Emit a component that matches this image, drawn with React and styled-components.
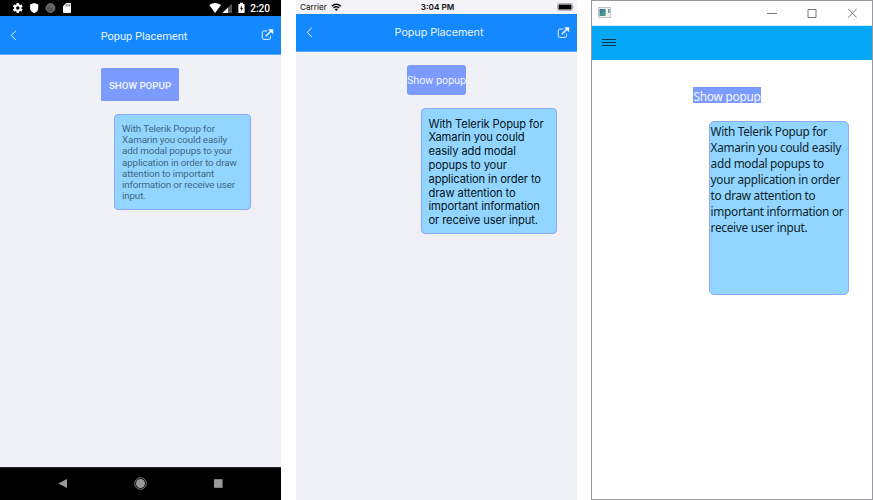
import React from "react";
import styled, { createGlobalStyle } from "styled-components";

const GlobalStyle = createGlobalStyle`
  * { box-sizing: border-box; }
  body { margin: 0; background: #fff; }
  svg { display: block; flex: none; }
`;

const Stage = styled.main`
  width: 873px;
  height: 500px;
  display: grid;
  grid-template-columns: 281px 280px 282px;
  column-gap: 15px;
  overflow: hidden;
`;

const Device = styled.section`
  width: ${(p) => p.$w || 281}px;
  height: 500px;
  display: flex;
  flex-direction: column;
  background: #f0f1f6;
  font-family: ${(p) => p.$font}, sans-serif;
`;

const Window = styled(Device)`
  background: #fff;
  border: 1px solid #9a9a9e;
`;

const StatusBar = styled.header`
  height: ${(p) => p.$height}px;
  flex: none;
  display: grid;
  grid-template-columns: 1fr auto 1fr;
  align-items: center;
  padding: ${(p) => p.$pad};
  background: ${(p) => (p.$dark ? "#000" : "#f3f3f8")};
  color: ${(p) => (p.$dark ? "#fff" : "#111")};
`;

const StatusGroup = styled.div`
  display: flex;
  align-items: center;
  gap: ${(p) => p.$gap || 0}px;
  justify-content: ${(p) => (p.$end ? "flex-end" : "flex-start")};
`;

const StatusText = styled.span`
  font-size: ${(p) => p.$size}px;
  font-weight: ${(p) => p.$weight || 400};
  letter-spacing: ${(p) => p.$spacing || 0}px;
  line-height: 12px;
  padding-top: ${(p) => p.$drop || 0}px;
  white-space: nowrap;
`;

const NavBar = styled.nav`
  height: ${(p) => p.$height}px;
  flex: none;
  display: grid;
  grid-template-columns: 20px 1fr 20px;
  align-items: center;
  padding: ${(p) => p.$pad};
  background: #1388ff;
  border-bottom: 1px solid #59a9fb;
  color: #e9f4ff;
`;

const Title = styled.h1`
  margin: 0;
  padding: ${(p) => p.$pad};
  text-align: center;
  font-size: ${(p) => p.$size}px;
  font-weight: 400;
  letter-spacing: ${(p) => p.$spacing}px;
  line-height: 16px;
  white-space: nowrap;
`;

const Content = styled.div`
  flex: 1;
  display: flex;
  flex-direction: column;
  align-items: flex-start;
  padding: ${(p) => p.$pad};
`;

const PopupButton = styled.button`
  width: ${(p) => p.$w}px;
  height: ${(p) => p.$h}px;
  display: flex;
  align-items: center;
  justify-content: center;
  padding: ${(p) => p.$pad || 0};
  border: 0;
  border-radius: ${(p) => p.$radius}px;
  background: #7b9bff;
  color: #f4f7ff;
  font-family: inherit;
  font-size: ${(p) => p.$size}px;
  font-weight: ${(p) => p.$weight || 400};
  letter-spacing: ${(p) => p.$spacing || 0}px;
  white-space: nowrap;
`;

const Popup = styled.div`
  width: ${(p) => p.$w}px;
  height: ${(p) => p.$h}px;
  margin: ${(p) => p.$margin};
  padding: ${(p) => p.$pad};
  border: 1px solid #8caaff;
  border-radius: ${(p) => p.$radius}px;
  background: #92d6ff;
  color: ${(p) => p.$color};
  font-size: ${(p) => p.$size}px;
  line-height: ${(p) => p.$line}px;
  letter-spacing: ${(p) => p.$spacing}px;
`;

const Line = styled.span`
  display: block;
  white-space: nowrap;
`;

const SystemNav = styled.footer`
  height: 33px;
  flex: none;
  display: flex;
  justify-content: space-between;
  align-items: center;
  padding: 0 56px 1px 56px;
  background: #000;
  border-top: 1px solid #25252a;
`;

const WindowTitle = styled.header`
  height: 25px;
  flex: none;
  display: flex;
  align-items: center;
  justify-content: space-between;
  padding: 0 15px 1px 6px;
  border-bottom: 1px solid #d9f0fd;
`;

const WindowControls = styled.div`
  display: flex;
  gap: 30px;
`;

const AppBar = styled.nav`
  height: 34px;
  flex: none;
  display: flex;
  align-items: center;
  padding: 0 10px;
  background: #04a8f6;
`;

const BackIcon = () => (
  <svg width="8" height="11" viewBox="0 0 8 11" fill="none" stroke="#f2f8ff">
    <path d="M5.9 .8 1.2 5.4 5.9 10" />
  </svg>
);

const OpenIcon = () => (
  <svg width="13" height="12" viewBox="0 0 13 12" fill="none" stroke="#e6f2ff">
    <path d="M6.2 2H2.4Q1.3 2 1.3 3.1V9.2Q1.3 10.4 2.4 10.4H8.2Q9.4 10.4 9.4 9.2V6.7" />
    <path d="M4.8 7.2 10.4 1.6" strokeWidth="1.6" />
    <path d="M7.2.3H12.2V5.3Z" fill="#fff" stroke="none" />
  </svg>
);

const AndroidIcons = () => (
  <svg width="61" height="12" viewBox="0 0 61 12">
    <g transform="translate(5.8 6)">
      {[0, 60, 120].map((a) => (
        <rect key={a} x="-1.3" y="-5" width="2.6" height="10" rx=".4" fill="#fff" transform={`rotate(${a})`} />
      ))}
      <circle r="3.7" fill="#fff" />
      <circle r="1.7" fill="#000" />
    </g>
    <path d="M22.2 1 26.3 2.6V6C26.3 8.5 24.6 10.3 22.2 11.2 19.8 10.3 18.1 8.5 18.1 6V2.6Z" fill="#fff" />
    <circle cx="38.5" cy="6" r="4.4" fill="#555" stroke="#929292" strokeWidth=".8" />
    <path d="M35.7 3A4.2 4.2 0 0 1 42.2 8.2Z" fill="#666" />
    <path d="M54.3 1H58.2Q59 1 59 1.8V10.2Q59 11 58.2 11H51.8Q51 11 51 10.2V4.2Z" fill="#fff" />
    <path d="M54.2 2.4V4.4M56 2.4V4.4M57.7 2.4V4.4" stroke="#222" strokeWidth=".8" />
  </svg>
);

const AndroidSignals = () => (
  <svg width="37" height="12" viewBox="0 0 37 12">
    <path d="M.2 3Q6-1 12 3L6.1 11Z" fill="#fff" />
    <path d="M23 1.4V11H13.4Z" fill="#555" />
    <path d="M19 5.4V11H13.4Z" fill="#fff" />
    <path d="M31 .8H34V2H35Q35.6 2 35.6 2.6V10.5Q35.6 11 35 11H30Q29.4 11 29.4 10.5V2.6Q29.4 2 30 2H31Z" fill="#fff" />
    <path d="M33.2 3.2 31 6.7H32.4L31.8 9.5 34 6H32.7Z" fill="#000" />
  </svg>
);

const WifiIcon = () => (
  <svg width="11" height="9" viewBox="0 0 11 9" fill="none" stroke="#111" strokeWidth="1.5">
    <path d="M.8 3.2Q5.3-.8 9.9 3.2M2.5 5Q5.3 2.7 8.2 5" />
    <path d="M3.7 6.2Q5.3 5 7 6.2L5.35 8.1Z" fill="#111" stroke="none" />
  </svg>
);

const BatteryIcon = () => (
  <svg width="18" height="8" viewBox="0 0 18 8">
    <rect x=".5" y=".5" width="15" height="7" rx="1.5" fill="#fff" stroke="#999" strokeWidth=".7" />
    <rect x="1.5" y="1.5" width="13" height="5" rx=".6" fill="#000" />
    <path d="M16.4 2.7Q17.4 4 16.4 5.3Z" fill="#777" />
  </svg>
);

const SystemNavIcon = ({ kind }) => (
  <svg width="13" height="13" viewBox="0 0 13 13" fill="#999">
    {kind === "back" && <path d="M2.3 6.5 11 2V11Z" />}
    {kind === "home" && (
      <>
        <circle cx="6.5" cy="6.5" r="4.5" />
        <circle cx="6.5" cy="6.5" r="5.8" fill="none" stroke="#999" strokeWidth=".8" />
      </>
    )}
    {kind === "recent" && <rect x="2" y="2.2" width="8.6" height="8.6" />}
  </svg>
);

const AppIcon = () => (
  <svg width="13" height="11" viewBox="0 0 13 11">
    <defs>
      <linearGradient id="pane" x2="1" y2="1">
        <stop stopColor="#3a68b0" />
        <stop offset="1" stopColor="#55ad78" />
      </linearGradient>
    </defs>
    <rect x=".5" y=".5" width="12" height="10" fill="#f2f2f2" stroke="#c4c4c4" />
    <rect x="1.5" y="2" width="6.2" height="7" fill="url(#pane)" />
    <rect x="10.2" y="2" width="1.4" height="4" fill="url(#pane)" />
  </svg>
);

const ControlIcon = ({ d }) => (
  <svg width="10" height="10" viewBox="0 0 10 10" fill="none" stroke="#666" strokeWidth=".9">
    <path d={d} />
  </svg>
);

const MenuIcon = () => (
  <svg width="14" height="8" viewBox="0 0 14 8" stroke="#103347">
    <path d="M0 .5H14M0 3.5H14M0 6.5H14" />
  </svg>
);

const androidLines = [
  "With Telerik Popup for",
  "Xamarin you could easily",
  "add modal popups to your",
  "application in order to draw",
  "attention to important",
  "information or receive user",
  "input.",
];

const iosLines = [
  "With Telerik Popup for",
  "Xamarin you could",
  "easily add modal",
  "popups to your",
  "application in order to",
  "draw attention to",
  "important information",
  "or receive user input.",
];

const windowsLines = [
  "With Telerik Popup for",
  "Xamarin you could easily",
  "add modal popups to",
  "your application in order",
  "to draw attention to",
  "important information or",
  "receive user input.",
];

const renderLines = (lines) => lines.map((text) => <Line key={text}>{text}</Line>);

export default function App() {
  return (
    <>
      <GlobalStyle />
      <Stage>
        <Device $font="Roboto">
          <StatusBar $dark $height={16} $pad="0 11px 0 12px">
            <StatusGroup><AndroidIcons /></StatusGroup>
            <span />
            <StatusGroup $end $gap={4}>
              <AndroidSignals />
              <StatusText $size={10.2} $weight={500} $spacing={-0.1} $drop={1}>2:20</StatusText>
            </StatusGroup>
          </StatusBar>
          <NavBar $height={39} $pad="0 0 0 10px">
            <BackIcon />
            <Title $size={11} $spacing={0} $pad="3px 3px 0 0">Popup Placement</Title>
            <OpenIcon />
          </NavBar>
          <Content $pad="13px 0 0 101px">
            <PopupButton $w={78} $h={33} $radius={1.5} $size={9.7} $weight={500} $spacing={0.03} $pad="1px 0 0">SHOW POPUP</PopupButton>
            <Popup $w={137} $h={96} $margin="13px 0 0 13px" $pad="8px 0 0 7px" $radius={4} $color="#3f6883" $size={9.8} $line={11.2} $spacing={-0.14}>
              {renderLines(androidLines)}
            </Popup>
          </Content>
          <SystemNav>
            <SystemNavIcon kind="back" />
            <SystemNavIcon kind="home" />
            <SystemNavIcon kind="recent" />
          </SystemNav>
        </Device>

        <Device $font="Inter">
          <StatusBar $height={14} $pad="0 2px 0 4px">
            <StatusGroup $gap={4}>
              <StatusText $size={8.2}>Carrier</StatusText>
              <WifiIcon />
            </StatusGroup>
            <StatusText $size={8.2} $weight={600}>3:04 PM</StatusText>
            <StatusGroup $end><BatteryIcon /></StatusGroup>
          </StatusBar>
          <NavBar $height={38} $pad="0 0 0 10px">
            <BackIcon />
            <Title $size={10.8} $spacing={-0.06} $pad="1px 5px 0 0">Popup Placement</Title>
            <OpenIcon />
          </NavBar>
          <Content $pad="13px 0 0 111px">
            <PopupButton $w={59} $h={30} $radius={3} $size={10.2} $spacing={-0.15}>Show popup</PopupButton>
            <Popup $w={136} $h={126} $margin="13px 0 0 14px" $pad="8.6px 0 0 6.5px" $radius={4} $color="#06131c" $size={11.2} $line={13.8} $spacing={-0.12}>
              {renderLines(iosLines)}
            </Popup>
          </Content>
        </Device>

        <Window $w={282} $font="'Noto Sans'">
          <WindowTitle>
            <AppIcon />
            <WindowControls>
              <ControlIcon d="M0 5.5H10" />
              <ControlIcon d="M1 1.5H9V9.5H1Z" />
              <ControlIcon d="M1.2 1 9.6 9.4M9.6 1 1.2 9.4" />
            </WindowControls>
          </WindowTitle>
          <AppBar><MenuIcon /></AppBar>
          <Content $pad="27px 0 0 101px">
            <PopupButton $w={68} $h={16} $radius={0} $size={11.8} $spacing={-0.2} $pad="1px 0 0">Show popup</PopupButton>
            <Popup $w={140} $h={174} $margin="18px 0 0 16px" $pad="1px 0 0 .6px" $radius={5} $color="#0d1f2b" $size={11.8} $line={16} $spacing={-0.29}>
              {renderLines(windowsLines)}
            </Popup>
          </Content>
        </Window>
      </Stage>
    </>
  );
}
